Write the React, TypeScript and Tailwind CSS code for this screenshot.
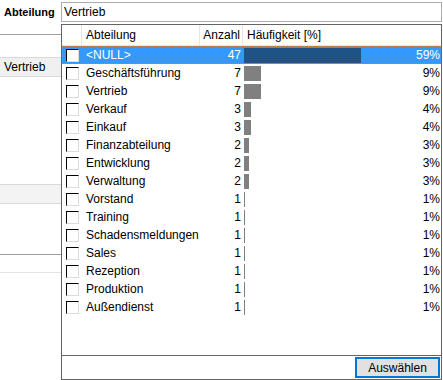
import * as React from "react";

type Row = { name: string; count: number; pct: string; bar: number };

const rows: Row[] = [
  { name: "<NULL>", count: 47, pct: "59%", bar: 117 },
  { name: "Geschäftsführung", count: 7, pct: "9%", bar: 17 },
  { name: "Vertrieb", count: 7, pct: "9%", bar: 17 },
  { name: "Verkauf", count: 3, pct: "4%", bar: 7 },
  { name: "Einkauf", count: 3, pct: "4%", bar: 7 },
  { name: "Finanzabteilung", count: 2, pct: "3%", bar: 5 },
  { name: "Entwicklung", count: 2, pct: "3%", bar: 5 },
  { name: "Verwaltung", count: 2, pct: "3%", bar: 5 },
  { name: "Vorstand", count: 1, pct: "1%", bar: 1 },
  { name: "Training", count: 1, pct: "1%", bar: 1 },
  { name: "Schadensmeldungen", count: 1, pct: "1%", bar: 1 },
  { name: "Sales", count: 1, pct: "1%", bar: 1 },
  { name: "Rezeption", count: 1, pct: "1%", bar: 1 },
  { name: "Produktion", count: 1, pct: "1%", bar: 1 },
  { name: "Außendienst", count: 1, pct: "1%", bar: 1 },
];

const CheckBox = () => (
  <span className="block h-[13px] w-[13px] border border-t-black border-l-black border-r-[#dcdcdc] border-b-[#dcdcdc] bg-white" />
);

const FilterRow: React.FC<{ row: Row; selected: boolean }> = ({ row, selected }) => (
  <div
    className={
      "flex h-[18px] items-stretch " +
      (selected
        ? "bg-[#3399ff] text-white outline outline-1 -outline-offset-1 outline-dotted outline-[#c8853c]"
        : "text-black")
    }
  >
    <div className="flex w-[20px] items-center pl-[4px]">
      <CheckBox />
    </div>
    <div className="w-[118px] whitespace-nowrap pl-[4px] leading-[18px]">{row.name}</div>
    <div className="w-[43px] pr-[2px] text-right leading-[18px]">{row.count}</div>
    <div className="relative w-[198px] pl-[1px]">
      <div
        className={"mt-[2px] h-[15px] " + (selected ? "bg-[#1f5286]" : "bg-[#808080]")}
        style={{ width: row.bar }}
      />
      <span className="absolute right-[1px] top-0 leading-[18px]">{row.pct}</span>
    </div>
  </div>
);

export default function App() {
  return (
    <div
      className="h-[380px] w-[443px] overflow-hidden bg-white text-[12px] text-black"
      style={{ fontFamily: '"Liberation Sans", Arial, sans-serif' }}
    >
      <div className="flex h-[24px] items-start">
        <div className="w-[61px] pl-[4px] pt-[4px] text-[11px] font-bold leading-[16px]">Abteilung</div>
        <div className="mt-[2px] h-[20px] w-[381px] border border-[#ababab] pl-[2px] leading-[18px]">
          Vertrieb
        </div>
      </div>

      <div className="flex h-[356px]">
        <div className="flex w-[61px] flex-col">
          <div className="mt-[10px] h-px bg-[#a0a0a0]" />
          <div className="mt-[22px] h-[20px] border-y border-[#dadada] bg-[#f0f0f0] pl-[4px] leading-[18px]">
            Vertrieb
          </div>
          <div className="mt-[107px] h-[20px] border-y border-[#dadada] bg-[#f3f3f3]" />
          <div className="mt-[50px] h-px bg-[#a0a0a0]" />
          <div className="mt-[17px] h-px bg-[#e3e3e3]" />
        </div>

        <div className="flex w-[381px] flex-col border border-[#646464]">
          <div className="flex h-[21px] border-b border-[#e5e5e5] leading-[20px]">
            <div className="w-[20px] border-r border-[#e5e5e5]" />
            <div className="w-[118px] border-r border-[#e5e5e5] pl-[4px]">Abteilung</div>
            <div className="w-[43px] border-r border-[#e5e5e5] pr-[2px] text-right">Anzahl</div>
            <div className="flex-1 pl-[4px]">Häufigkeit [%]</div>
          </div>
          <div className="flex-1">
            {rows.map((r, i) => (
              <FilterRow key={r.name} row={r} selected={i === 0} />
            ))}
          </div>
          <div className="flex h-[24px] justify-end border-t border-[#646464] pr-[1px] pt-[1px]">
            <button className="h-[21px] w-[85px] border-2 border-[#0078d7] bg-[#e1e1e1] leading-[16px]">
              Auswählen
            </button>
          </div>
        </div>
      </div>
    </div>
  );
}
